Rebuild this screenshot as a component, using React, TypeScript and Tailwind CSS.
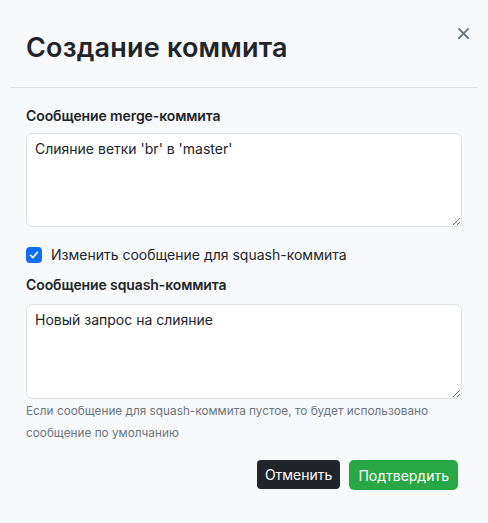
import { useState } from "react";

export default function App() {
  const [squash, setSquash] = useState(true);

  return (
    <div className="w-[488px] h-[523px] bg-[#f8f9fa] text-[#212529] font-['Inter',sans-serif] relative">
      <button className="absolute right-[19px] top-[28px] w-[11px] h-[11px] text-[#6c757d]">
        <svg viewBox="0 0 11 11" width="11" height="11" stroke="currentColor" strokeWidth="1.8" strokeLinecap="square">
          <path d="M1 1 L10 10 M10 1 L1 10" />
        </svg>
      </button>

      <div className="px-[26px] pt-[33px] pb-[24px]">
        <h1 className="text-[27px] leading-[30px] font-semibold tracking-[0.2px]">Создание коммита</h1>
      </div>
      <div className="mx-[10px] border-t border-[#dee2e6]" />

      <div className="px-[26px] pt-[18px]">
        <label className="block text-[14px] leading-[20px] font-semibold tracking-[-0.1px]">Сообщение merge-коммита</label>
        <textarea
          defaultValue="Слияние ветки 'br' в 'master'"
          className="mt-[7px] block w-full h-[94px] rounded-[6px] border border-[#dee2e6] bg-white px-[8px] pt-[5px] pb-[6px] text-[14px] leading-[20px] outline-none"
        />

        <label className="mt-[20px] flex items-center gap-[9px] text-[14px] leading-[16px]">
          <span
            onClick={() => setSquash(!squash)}
            className={
              "w-[16px] h-[16px] rounded-[4px] flex items-center justify-center " +
              (squash ? "bg-[#0d6efd]" : "bg-white border border-[#dee2e6]")
            }
          >
            {squash && (
              <svg viewBox="0 0 16 16" width="12" height="12" fill="none" stroke="white" strokeWidth="2.2" strokeLinecap="round" strokeLinejoin="round">
                <path d="M3.5 8.5 L6.5 11.5 L12.5 4.5" />
              </svg>
            )}
          </span>
          Изменить сообщение для squash-коммита
        </label>

        <label className="mt-[12px] block text-[14px] leading-[20px] font-semibold tracking-[-0.1px]">Сообщение squash-коммита</label>
        <textarea
          defaultValue="Новый запрос на слияние"
          className="mt-[9px] block w-full h-[95px] rounded-[6px] border border-[#dee2e6] bg-white px-[8px] pt-[5px] pb-[6px] text-[14px] leading-[20px] outline-none"
        />
        <p className="mt-[1px] text-[11.8px] leading-[22px] text-[#6c757d]">
          Если сообщение для squash-коммита пустое, то будет использовано сообщение по умолчанию
        </p>

        <div className="mt-[16px] flex justify-end gap-[9px] pr-[4px]">
          <button className="h-[29px] px-[8px] rounded-[4px] bg-[#212529] text-white text-[14px]">Отменить</button>
          <button className="h-[30px] px-[9px] rounded-[5px] bg-[#28a745] text-white text-[14px]">Подтвердить</button>
        </div>
      </div>
    </div>
  );
}
